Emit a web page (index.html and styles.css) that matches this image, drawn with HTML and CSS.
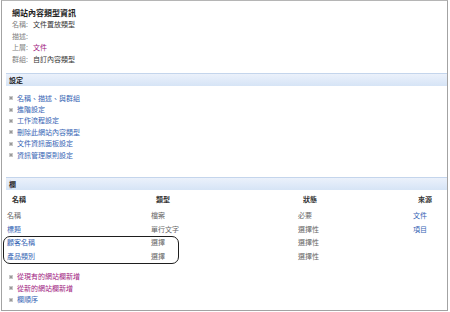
FILE: index.html
```html
<!DOCTYPE html>
<html lang="zh-Hant">
<head>
    <meta charset="UTF-8">
    <title>網站內容類型資訊</title>
    <link rel="stylesheet" href="styles.css">
</head>
<body>
    <div class="frame">
        <div class="info">
            <div class="info-title">網站內容類型資訊</div>
            <div class="info-row"><span class="info-label">名稱:</span>文件置放類型</div>
            <div class="info-row"><span class="info-label">描述:</span></div>
            <div class="info-row"><span class="info-label">上層:</span><a href="#" class="visited">文件</a></div>
            <div class="info-row"><span class="info-label">群組:</span>自訂內容類型</div>
        </div>

        <div class="section-bar">設定</div>
        <ul class="link-list settings-list">
            <li><a href="#">名稱、描述、與群組</a></li>
            <li><a href="#">進階設定</a></li>
            <li><a href="#">工作流程設定</a></li>
            <li><a href="#">刪除此網站內容類型</a></li>
            <li><a href="#">文件資訊面板設定</a></li>
            <li><a href="#">資訊管理原則設定</a></li>
        </ul>

        <div class="section-bar">欄</div>
        <div class="col-grid col-head">
            <div>名稱</div>
            <div>類型</div>
            <div>狀態</div>
            <div>來源</div>
        </div>
        <div class="col-grid col-row">
            <div>名稱</div>
            <div>檔案</div>
            <div>必要</div>
            <div><a href="#">文件</a></div>
        </div>
        <div class="col-grid col-row">
            <div><a href="#">標題</a></div>
            <div>單行文字</div>
            <div>選擇性</div>
            <div><a href="#">項目</a></div>
        </div>
        <div class="highlight">
            <div class="col-grid col-row">
                <div><a href="#">顧客名稱</a></div>
                <div>選擇</div>
                <div>選擇性</div>
                <div></div>
            </div>
            <div class="col-grid col-row">
                <div><a href="#">產品類別</a></div>
                <div>選擇</div>
                <div>選擇性</div>
                <div></div>
            </div>
        </div>

        <ul class="link-list column-links">
            <li><a href="#" class="visited">從現有的網站欄新增</a></li>
            <li><a href="#" class="visited">從新的網站欄新增</a></li>
            <li><a href="#">欄順序</a></li>
        </ul>
    </div>
</body>
</html>
```

FILE: styles.css
```css
body {
    margin: 0;
    background-color: #FFFFFF;
    font-family: "Noto Sans CJK TC", "Noto Sans", sans-serif;
    font-size: 7px;
    color: #555555;
}

a {
    color: #3564B4;
    text-decoration: none;
}

a.visited {
    color: #A0207E;
}

.frame {
    box-sizing: border-box;
    width: 447px;
    height: 311px;
    margin-left: 1px;
    padding-left: 4px;
    border: 1px solid #A3A3A3;
    border-top-color: #B5B5B5;
}

.info {
    padding: 6px 0 0 6px;
}

.info-title {
    font-size: 8px;
    font-weight: bold;
    color: #222222;
    line-height: 12px;
}

.info-row {
    line-height: 11.5px;
    color: #333333;
}

.info-label {
    display: inline-block;
    width: 21px;
    color: #808080;
}

.section-bar {
    margin-top: 8px;
    height: 13px;
    line-height: 13px;
    padding-left: 3px;
    box-sizing: border-box;
    border-top: 1px solid #C4D5EC;
    background: linear-gradient(#EBF1FB, #D6E4F6);
    font-weight: bold;
    color: #222222;
}

.link-list {
    list-style: none;
    margin: 0;
    padding: 6.5px 0 0 3px;
}

.link-list li {
    display: flex;
    align-items: center;
    line-height: 11.4px;
}

.link-list li::before {
    content: "";
    width: 2px;
    height: 2px;
    margin-right: 4px;
    background-color: #9A9A9A;
    border: 0.5px solid #C8C8C8;
}

.settings-list + .section-bar {
    margin-top: 16.5px;
    height: 12.5px;
    line-height: 12.5px;
}

.col-grid {
    display: grid;
    grid-template-columns: 144px 147px 115px 1fr;
    padding-left: 1px;
}

.col-head {
    margin-top: 3px;
    line-height: 12px;
    font-weight: bold;
    color: #333333;
}

.col-head div {
    padding-left: 5px;
}

.col-head + .col-row {
    margin-top: 4.5px;
}

.col-row {
    line-height: 13.5px;
    color: #666666;
}

.highlight {
    position: relative;
}

.highlight::after {
    content: "";
    position: absolute;
    top: -0.5px;
    bottom: -1px;
    left: -3.5px;
    width: 174px;
    border: 1.5px solid #1E1E1E;
    border-radius: 7px;
}

.column-links {
    padding-top: 8px;
}

.column-links li {
    line-height: 11.3px;
}
```
